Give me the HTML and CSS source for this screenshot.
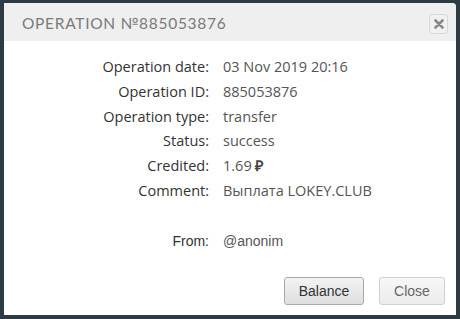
FILE: index.html
```html
<!DOCTYPE html>
<html>
<head>
<meta charset="utf-8">
<link rel="stylesheet" href="styles.css">
</head>
<body>
<div class="modal">
  <div class="modal-header">
    <div class="title">OPERATION №885053876</div>
    <button class="x-btn" aria-label="close">
      <svg width="10" height="10" viewBox="0 0 10 10"><path d="M1.5 1.5 L8.5 8.5 M8.5 1.5 L1.5 8.5" stroke="#888" stroke-width="2.6" stroke-linecap="round"/></svg>
    </button>
  </div>
  <div class="modal-body">
    <div class="info">
      <div class="lbl">Operation date:</div><div class="val">03 Nov 2019 20:16</div>
      <div class="lbl">Operation ID:</div><div class="val">885053876</div>
      <div class="lbl">Operation type:</div><div class="val">transfer</div>
      <div class="lbl">Status:</div><div class="val">success</div>
      <div class="lbl">Credited:</div><div class="val">1.69 <b class="rub">₽</b></div>
      <div class="lbl">Comment:</div><div class="val">Выплата LOKEY.CLUB</div>
      <div class="lbl spacer"></div><div class="val spacer"></div>
      <div class="lbl from">From:</div><div class="val from">@anonim</div>
    </div>
  </div>
  <div class="modal-footer">
    <button class="btn btn-primary">Balance</button>
    <button class="btn btn-light">Close</button>
  </div>
</div>
</body>
</html>
```
FILE: styles.css
```css
html, body { margin: 0; padding: 0; }
body {
  background: #2c3b44;
  width: 460px;
  height: 319px;
  padding: 3px 4px 4px 4px;
  box-sizing: border-box;
}
.modal {
  background: #fff;
  height: 312px;
  border-radius: 0 4px 0 0;
  display: flex;
  flex-direction: column;
  overflow: hidden;
}
.modal-header {
  background: #efefef;
  height: 38px;
  display: flex;
  align-items: center;
  justify-content: space-between;
  padding: 0 8px 0 18px;
}
.title {
  font-family: "Lato", sans-serif;
  font-size: 15.5px;
  letter-spacing: 0.7px;
  color: #7a7a7a;
  padding-top: 1px;
}
.x-btn {
  width: 19px;
  height: 20px;
  border: 1px solid #d8d8d8;
  border-radius: 3px;
  background: #f1f1f1;
  display: flex;
  align-items: center;
  justify-content: center;
  padding: 0;
  margin-top: 4px;
}
.modal-body {
  padding: 14px 0 0 0;
  flex: 1;
}
.info {
  display: grid;
  grid-template-columns: 205px 1fr;
  column-gap: 14px;
  font-family: "Open Sans", sans-serif;
  font-size: 14.5px;
  line-height: 24.8px;
}
.lbl { text-align: right; color: #333; }
.val { color: #555; }
.spacer { height: 24.8px; }
.rub { font-weight: 700; color: #444; }
.from { font-family: "Liberation Sans", sans-serif; font-size: 14px; }
.modal-footer {
  display: flex;
  justify-content: flex-end;
  gap: 15px;
  padding: 0 11px 10px 0;
}
.btn {
  font-family: "Liberation Sans", sans-serif;
  font-size: 14px;
  height: 28px;
  border-radius: 3px;
  padding: 0;
}
.btn-primary {
  width: 80px;
  color: #333;
  border: 1px solid #a9a9a9;
  background: linear-gradient(#f3f3f3, #dedede);
}
.btn-light {
  width: 66px;
  color: #666;
  border: 1px solid #d0d0d0;
  background: linear-gradient(#f7f7f7, #ececec);
}
```
